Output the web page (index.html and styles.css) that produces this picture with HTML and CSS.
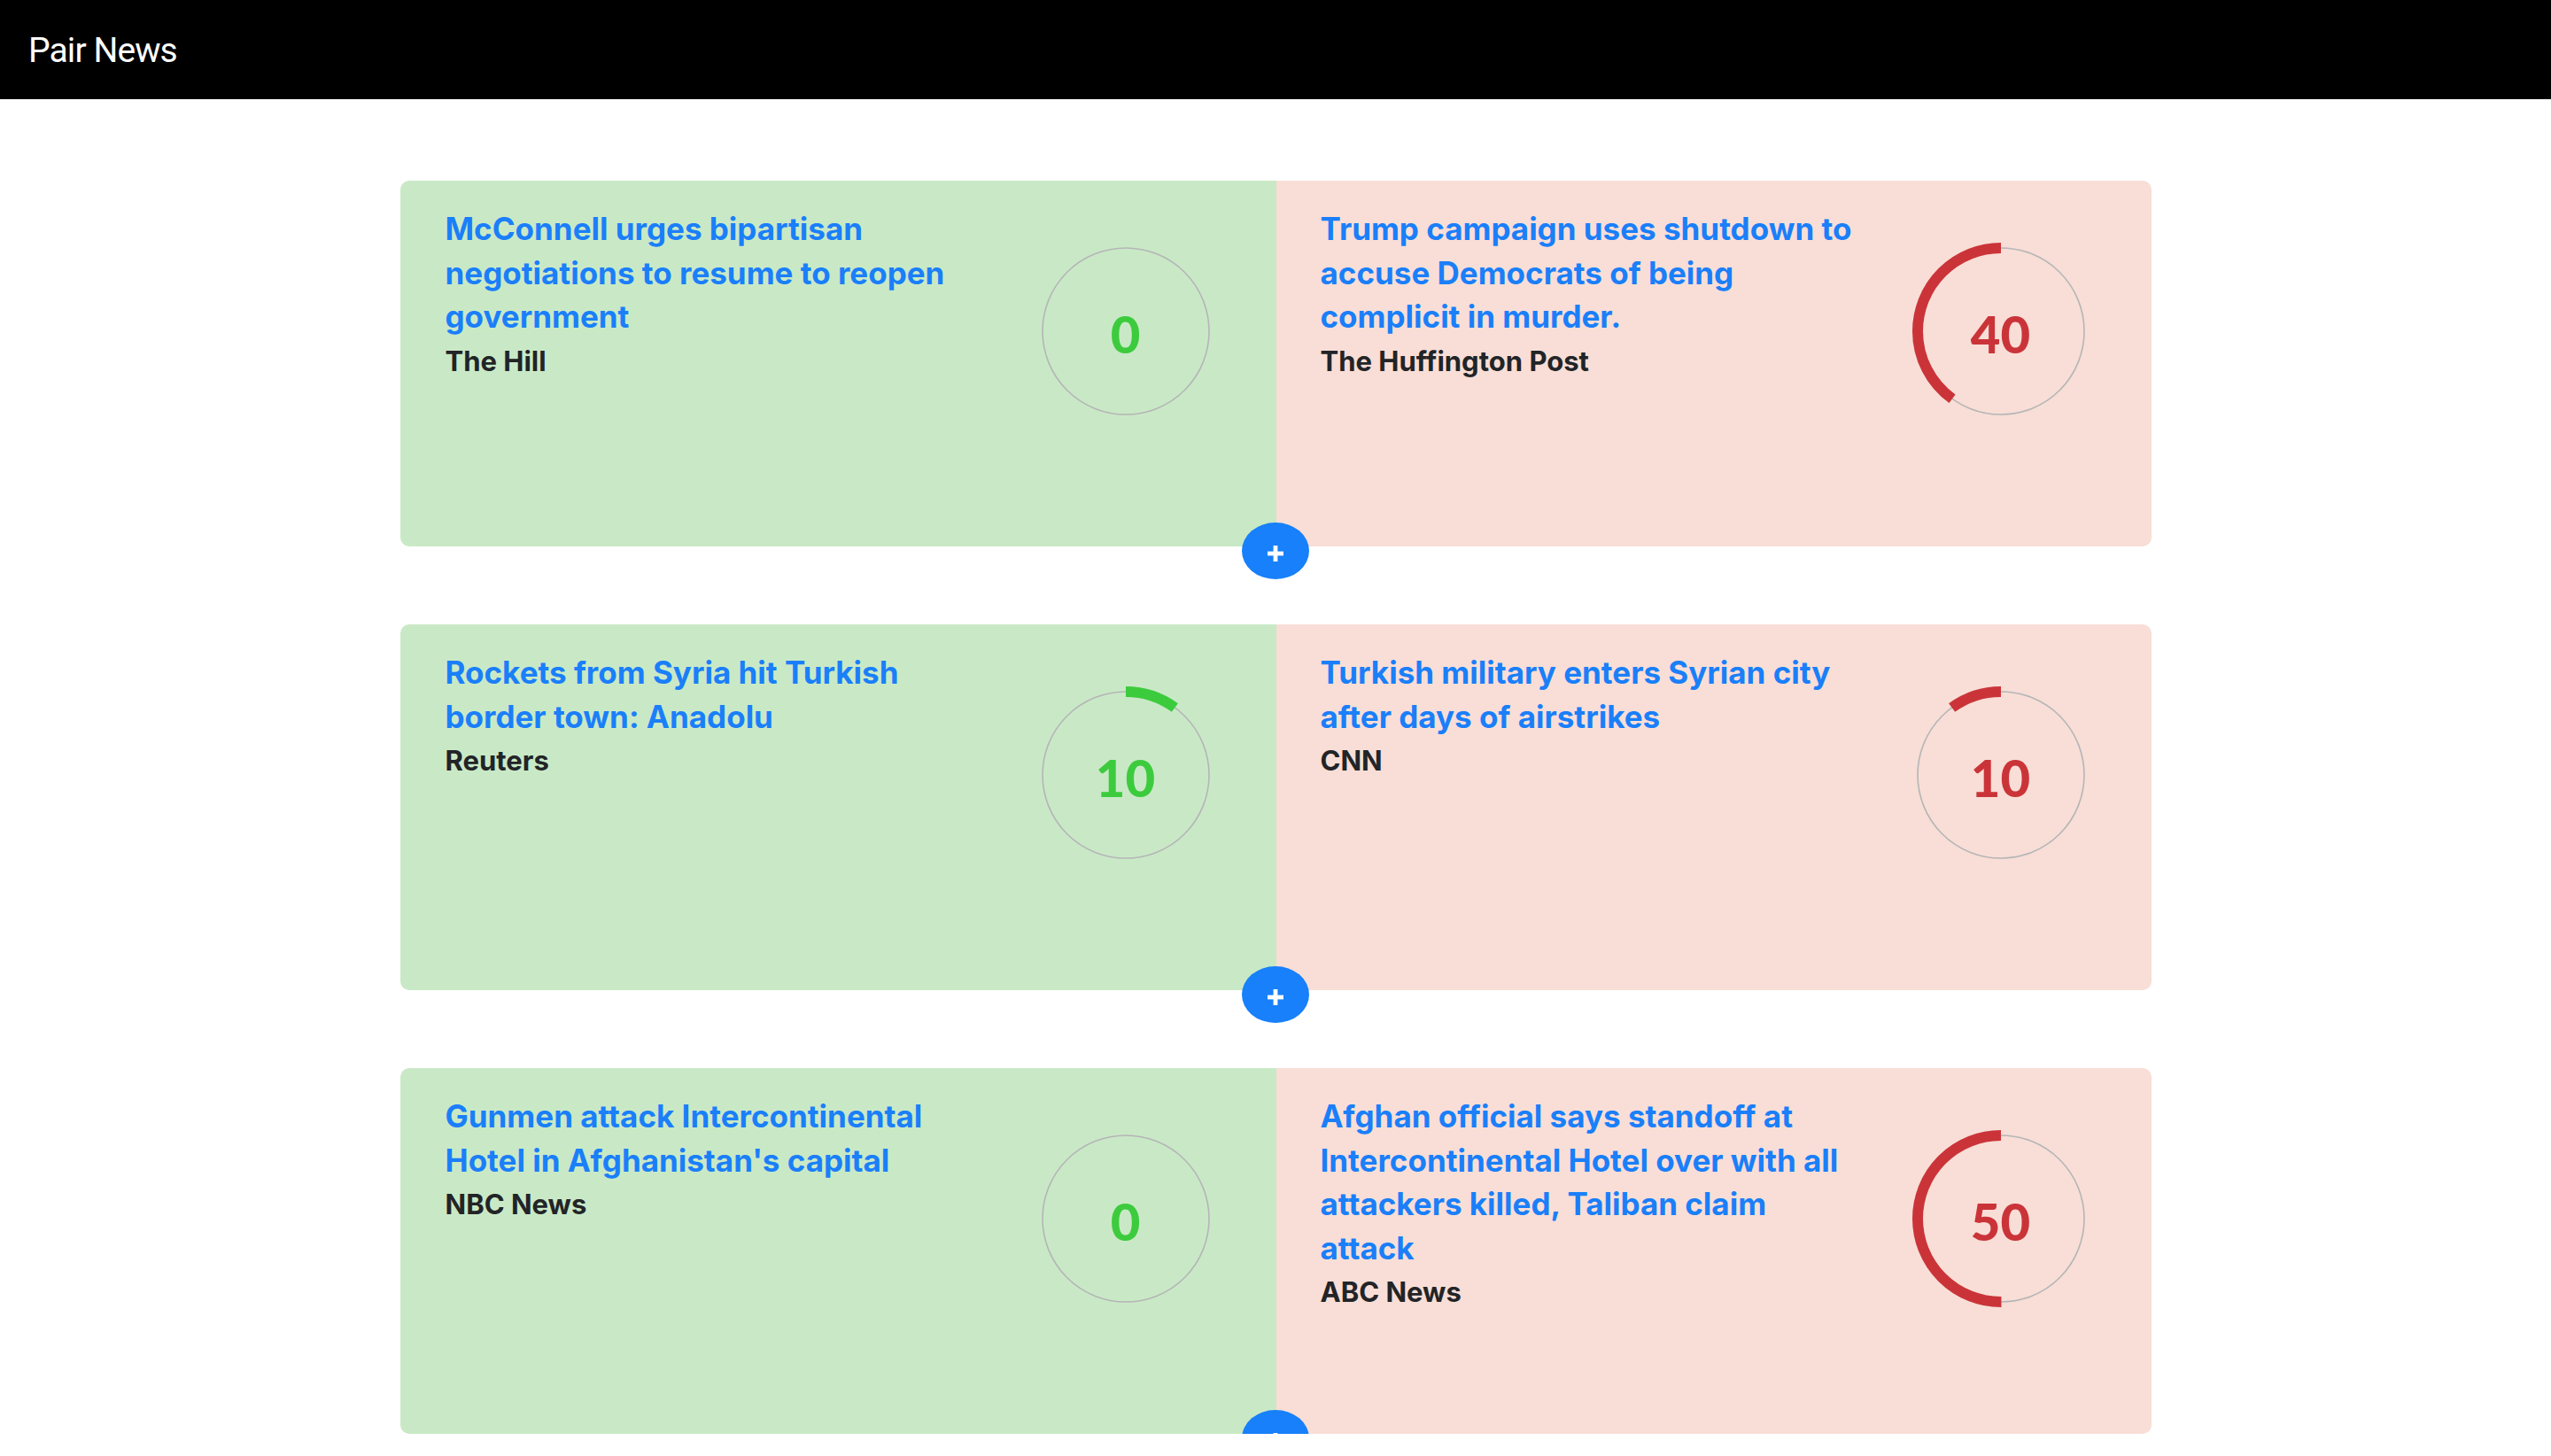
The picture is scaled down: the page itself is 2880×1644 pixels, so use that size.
FILE: index.html
```html
<!DOCTYPE html>
<html lang="en">
<head>
<meta charset="utf-8">
<title>Pair News</title>
<link rel="stylesheet" href="styles.css">
</head>
<body>
<nav class="navbar"><a class="brand" href="#">Pair News</a></nav>
<main class="list">
  <section class="pair">
    <div class="side side-good">
      <div class="story">
        <a class="headline" href="#">McConnell urges bipartisan negotiations to resume to reopen government</a>
        <div class="source">The Hill</div>
      </div>
      <div class="score score-good">
        <svg class="ring" viewBox="0 0 200 200" width="200" height="200"><circle class="track" cx="100" cy="100" r="94"/></svg>
        <span class="value">0</span>
      </div>
    </div>
    <div class="side side-bad">
      <div class="story">
        <a class="headline" href="#">Trump campaign uses shutdown to accuse Democrats of being complicit in murder.</a>
        <div class="source">The Huffington Post</div>
      </div>
      <div class="score score-bad">
        <svg class="ring" viewBox="0 0 200 200" width="200" height="200"><circle class="track" cx="100" cy="100" r="94"/><circle class="arc arc-ccw" cx="100" cy="100" r="94" stroke-dasharray="236.2 1000"/></svg>
        <span class="value">40</span>
      </div>
    </div>
    <button class="add" type="button" aria-label="add"><svg class="plus" viewBox="0 0 18 18" width="18" height="18"><rect x="6.6" y="0" width="4.8" height="18"/><rect x="0" y="6.6" width="18" height="4.8"/></svg></button>
  </section>

  <section class="pair">
    <div class="side side-good">
      <div class="story">
        <a class="headline" href="#">Rockets from Syria hit Turkish border town: Anadolu</a>
        <div class="source">Reuters</div>
      </div>
      <div class="score score-good">
        <svg class="ring" viewBox="0 0 200 200" width="200" height="200"><circle class="track" cx="100" cy="100" r="94"/><circle class="arc arc-cw" cx="100" cy="100" r="94" stroke-dasharray="59.1 1000"/></svg>
        <span class="value">10</span>
      </div>
    </div>
    <div class="side side-bad">
      <div class="story">
        <a class="headline" href="#">Turkish military enters Syrian city after days of airstrikes</a>
        <div class="source">CNN</div>
      </div>
      <div class="score score-bad">
        <svg class="ring" viewBox="0 0 200 200" width="200" height="200"><circle class="track" cx="100" cy="100" r="94"/><circle class="arc arc-ccw" cx="100" cy="100" r="94" stroke-dasharray="59.1 1000"/></svg>
        <span class="value">10</span>
      </div>
    </div>
    <button class="add" type="button" aria-label="add"><svg class="plus" viewBox="0 0 18 18" width="18" height="18"><rect x="6.6" y="0" width="4.8" height="18"/><rect x="0" y="6.6" width="18" height="4.8"/></svg></button>
  </section>

  <section class="pair">
    <div class="side side-good">
      <div class="story">
        <a class="headline" href="#">Gunmen attack Intercontinental Hotel in Afghanistan's capital</a>
        <div class="source">NBC News</div>
      </div>
      <div class="score score-good">
        <svg class="ring" viewBox="0 0 200 200" width="200" height="200"><circle class="track" cx="100" cy="100" r="94"/></svg>
        <span class="value">0</span>
      </div>
    </div>
    <div class="side side-bad">
      <div class="story">
        <a class="headline" href="#">Afghan official says standoff at Intercontinental Hotel over with all attackers killed, Taliban claim attack</a>
        <div class="source">ABC News</div>
      </div>
      <div class="score score-bad">
        <svg class="ring" viewBox="0 0 200 200" width="200" height="200"><circle class="track" cx="100" cy="100" r="94"/><circle class="arc arc-ccw" cx="100" cy="100" r="94" stroke-dasharray="295.3 1000"/></svg>
        <span class="value">50</span>
      </div>
    </div>
    <button class="add" type="button" aria-label="add"><svg class="plus" viewBox="0 0 18 18" width="18" height="18"><rect x="6.6" y="0" width="4.8" height="18"/><rect x="0" y="6.6" width="18" height="4.8"/></svg></button>
  </section>
</main>
</body>
</html>
```

FILE: styles.css
```css
* { box-sizing: border-box; }
html, body { margin: 0; padding: 0; }
body {
  background: #ffffff;
  font-family: Inter, "Noto Sans", "Liberation Sans", sans-serif;
  color: #212529;
}
.navbar {
  height: 112px;
  background: #000000;
  display: flex;
  align-items: center;
  padding: 0 32px;
}
.brand {
  color: #ffffff;
  text-decoration: none;
  font-family: Roboto, "Liberation Sans", sans-serif;
  font-size: 39px;
  letter-spacing: -0.9px;
  line-height: 60px;
  margin-top: 2px;
}
.list {
  display: flex;
  flex-direction: column;
  align-items: center;
  gap: 88px;
  padding-top: 92px;
}
.pair {
  position: relative;
  width: 1977px;
  height: 413px;
  display: flex;
}
.side {
  flex: 1 1 0;
  display: flex;
  align-items: flex-start;
  padding: 30px 70px 0 51px;
}
.side-good {
  background: #c9e9c6;
  border-radius: 10px 0 0 10px;
}
.side-bad {
  background: #f8ded6;
  border-radius: 0 10px 10px 0;
  padding-left: 50px;
}
.story {
  flex: 0 1 608px;
  display: flex;
  flex-direction: column;
}
.headline {
  color: #1a7ff9;
  text-decoration: none;
  font-weight: 700;
  font-size: 35px;
  line-height: 49.5px;
}
.source {
  font-weight: 700;
  font-size: 31px;
  line-height: 49.5px;
  color: #222427;
}
.score {
  margin-left: auto;
  margin-top: 40px;
  flex: none;
  width: 200px;
  height: 200px;
  display: grid;
  place-items: center;
}
.score > * { grid-area: 1 / 1; }
.ring { display: block; }
.track {
  fill: none;
  stroke: #b5b5b7;
  stroke-width: 1.6;
}
.arc {
  fill: none;
  stroke-width: 12;
  stroke-linecap: butt;
}
.arc-cw { transform: rotate(-90deg); transform-origin: 100px 100px; }
.arc-ccw { transform: rotate(-90deg) scaleY(-1); transform-origin: 100px 100px; }
.score-good .arc { stroke: #3dcb3e; }
.score-bad .arc { stroke: #ca3439; }
.value {
  font-family: Lato, "Open Sans", sans-serif;
  font-weight: 900;
  font-size: 58px;
  line-height: 1;
  margin-top: 6px;
}
.score-good .value { color: #3dcb3e; }
.score-bad .value { color: #ca3439; }
.add {
  position: absolute;
  left: 50%;
  top: 386px;
  transform: translateX(-50%);
  width: 76px;
  height: 64px;
  border: none;
  border-radius: 50%;
  background: #1780fa;
  padding: 6px 0 0 0;
  display: flex;
  align-items: center;
  justify-content: center;
}
.plus { display: block; fill: #ffffff; }
```
